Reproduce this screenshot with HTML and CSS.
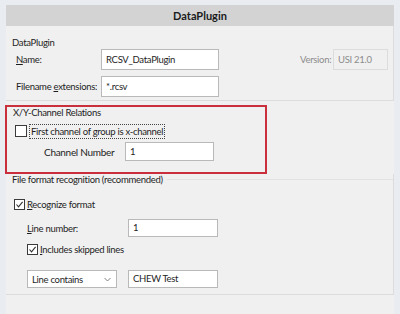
FILE: index.html
```html
<!DOCTYPE html>
<html lang="en">
<head>
    <meta charset="UTF-8">
    <title>DataPlugin</title>
    <link rel="stylesheet" href="styles.css">
</head>
<body>
    <div class="dialog">
        <div class="titlebar">DataPlugin</div>

        <div class="group group-plugin">
            <div class="group-title">DataPlugin</div>
            <div class="row">
                <span class="lbl lbl-plugin"><u>N</u>ame:</span>
                <span class="field field-name">RCSV_DataPlugin</span>
                <span class="version-lbl">Version:</span>
                <span class="field field-version">USI 21.0</span>
            </div>
            <div class="row">
                <span class="lbl lbl-plugin">Filename <u>e</u>xtensions:</span>
                <span class="field field-name">*.rcsv</span>
            </div>
        </div>

        <div class="group group-xy">
            <div class="group-title">X/Y-Channel Relations</div>
            <div class="check-row check-first">
                <span class="checkbox"></span>
                <span class="focus-text">First channel of <u>g</u>roup is x-channel</span>
            </div>
            <div class="row row-channel">
                <span class="lbl lbl-channel">Channel Number</span>
                <span class="field field-channel">1</span>
            </div>
        </div>

        <div class="group group-format">
            <div class="group-title">File format recognition (recommended)<span class="title-line"></span></div>
            <div class="check-row check-recognize">
                <span class="checkbox checked">
                    <svg width="9" height="9" viewBox="0 0 9 9"><polyline points="1.5,4.5 3.5,6.8 7.6,1.8" fill="none" stroke="#333" stroke-width="1.1"/></svg>
                </span>
                <span><u>R</u>ecognize format</span>
            </div>
            <div class="row row-indent">
                <span class="lbl lbl-format"><u>L</u>ine number:</span>
                <span class="field field-format">1</span>
            </div>
            <div class="check-row check-skipped">
                <span class="checkbox checked">
                    <svg width="9" height="9" viewBox="0 0 9 9"><polyline points="1.5,4.5 3.5,6.8 7.6,1.8" fill="none" stroke="#333" stroke-width="1.1"/></svg>
                </span>
                <span><u>I</u>ncludes skipped lines</span>
            </div>
            <div class="row row-indent row-select">
                <span class="select">Line contains
                    <svg class="chevron" width="7" height="5" viewBox="0 0 7 5"><polyline points="0.5,1 3.5,4 6.5,1" fill="none" stroke="#777" stroke-width="0.9"/></svg>
                </span>
                <span class="field field-format">CHEW Test</span>
            </div>
        </div>
    </div>
</body>
</html>
```

FILE: styles.css
```css
body {
    margin: 0;
    background-color: #e9edf2;
    font-family: Lato, "Noto Sans", sans-serif;
    font-size: 9.5px;
    letter-spacing: -0.3px;
    color: #1e1e1e;
    height: 314px;
    overflow: hidden;
}

.dialog {
    margin: 5px 6px 0 6px;
    width: 388px;
    height: 309px;
    background-color: #f0f0f0;
}

.titlebar {
    height: 21px;
    line-height: 21px;
    background-color: #d3d3d3;
    text-align: center;
    font-weight: bold;
    font-size: 11px;
    letter-spacing: 0;
    color: #1a1a1a;
}

.group {
    border-right: 1px solid #dcdcdc;
    border-bottom: 1px solid #dcdcdc;
}

.group-title {
    display: flex;
    align-items: center;
    height: 12px;
    line-height: 12px;
    padding-left: 6px;
    white-space: nowrap;
}

.title-line {
    flex: 1;
    margin-left: 4px;
    margin-top: -2px;
    border-top: 1px solid #e2e2e2;
}

.row {
    display: flex;
    align-items: center;
    height: 21px;
}

.lbl {
    white-space: nowrap;
}

.lbl-plugin {
    width: 85px;
    padding-left: 10px;
}

.field {
    box-sizing: border-box;
    height: 21px;
    line-height: 19px;
    padding: 0 4px;
    background-color: #fff;
    border: 1px solid #b9b9b9;
    white-space: nowrap;
}

.field-name {
    width: 118px;
}

.version-lbl {
    margin-left: 81px;
    width: 33px;
    color: #8c8c8c;
}

.field-version {
    width: 55px;
    background-color: #f0f0f0;
    border-color: #dcdcdc;
    color: #8c8c8c;
}

/* DataPlugin group */
.group-plugin {
    padding: 10px 0 3px 0;
}

.group-plugin .group-title {
    height: 13px;
    line-height: 13px;
}

.group-plugin .row + .row {
    margin-top: 6px;
}

/* X/Y group with the red marking */
.group-xy {
    width: 258px;
    margin: 4px 0 0 -1px;
    padding-bottom: 11px;
    border: 2px solid #c9303b;
}

.check-row {
    display: flex;
    align-items: center;
    height: 16px;
    white-space: nowrap;
}

.checkbox {
    box-sizing: border-box;
    width: 12px;
    height: 12px;
    margin-right: 2px;
    background-color: #fff;
    border: 1px solid #3a3a3a;
    display: flex;
    align-items: center;
    justify-content: center;
}

.check-first {
    margin-top: 4px;
    padding-left: 8px;
}

.focus-text {
    padding: 0 1px;
    border: 1px dotted #444;
    line-height: 13px;
}

.row-channel {
    height: 19px;
    margin-top: 3px;
}

.lbl-channel {
    width: 81px;
    padding-left: 37px;
    font-size: 10px;
}

.field-channel {
    width: 89px;
    height: 19px;
    line-height: 17px;
}

/* File format group */
.group-format {
    height: 120px;
}

.check-recognize {
    margin-top: 10px;
    padding-left: 8px;
}

.check-recognize .checkbox,
.check-skipped .checkbox {
    width: 11px;
    height: 11px;
}

.row-indent {
    height: 18px;
    padding-left: 21px;
}

.row-indent .lbl-format {
    width: 101px;
}

.row-indent .field {
    height: 18px;
    line-height: 16px;
}

.field-format {
    width: 90px;
}

.group-format .row-indent:nth-child(3) {
    margin-top: 7px;
}

.check-skipped {
    margin-top: 4px;
    padding-left: 21px;
}

.row-select {
    margin-top: 13px;
}

.select {
    box-sizing: border-box;
    display: flex;
    align-items: center;
    justify-content: space-between;
    width: 90px;
    height: 18px;
    margin-right: 11px;
    padding: 0 5px 0 4px;
    background-color: #fff;
    border: 1px solid #b9b9b9;
    white-space: nowrap;
}
```
